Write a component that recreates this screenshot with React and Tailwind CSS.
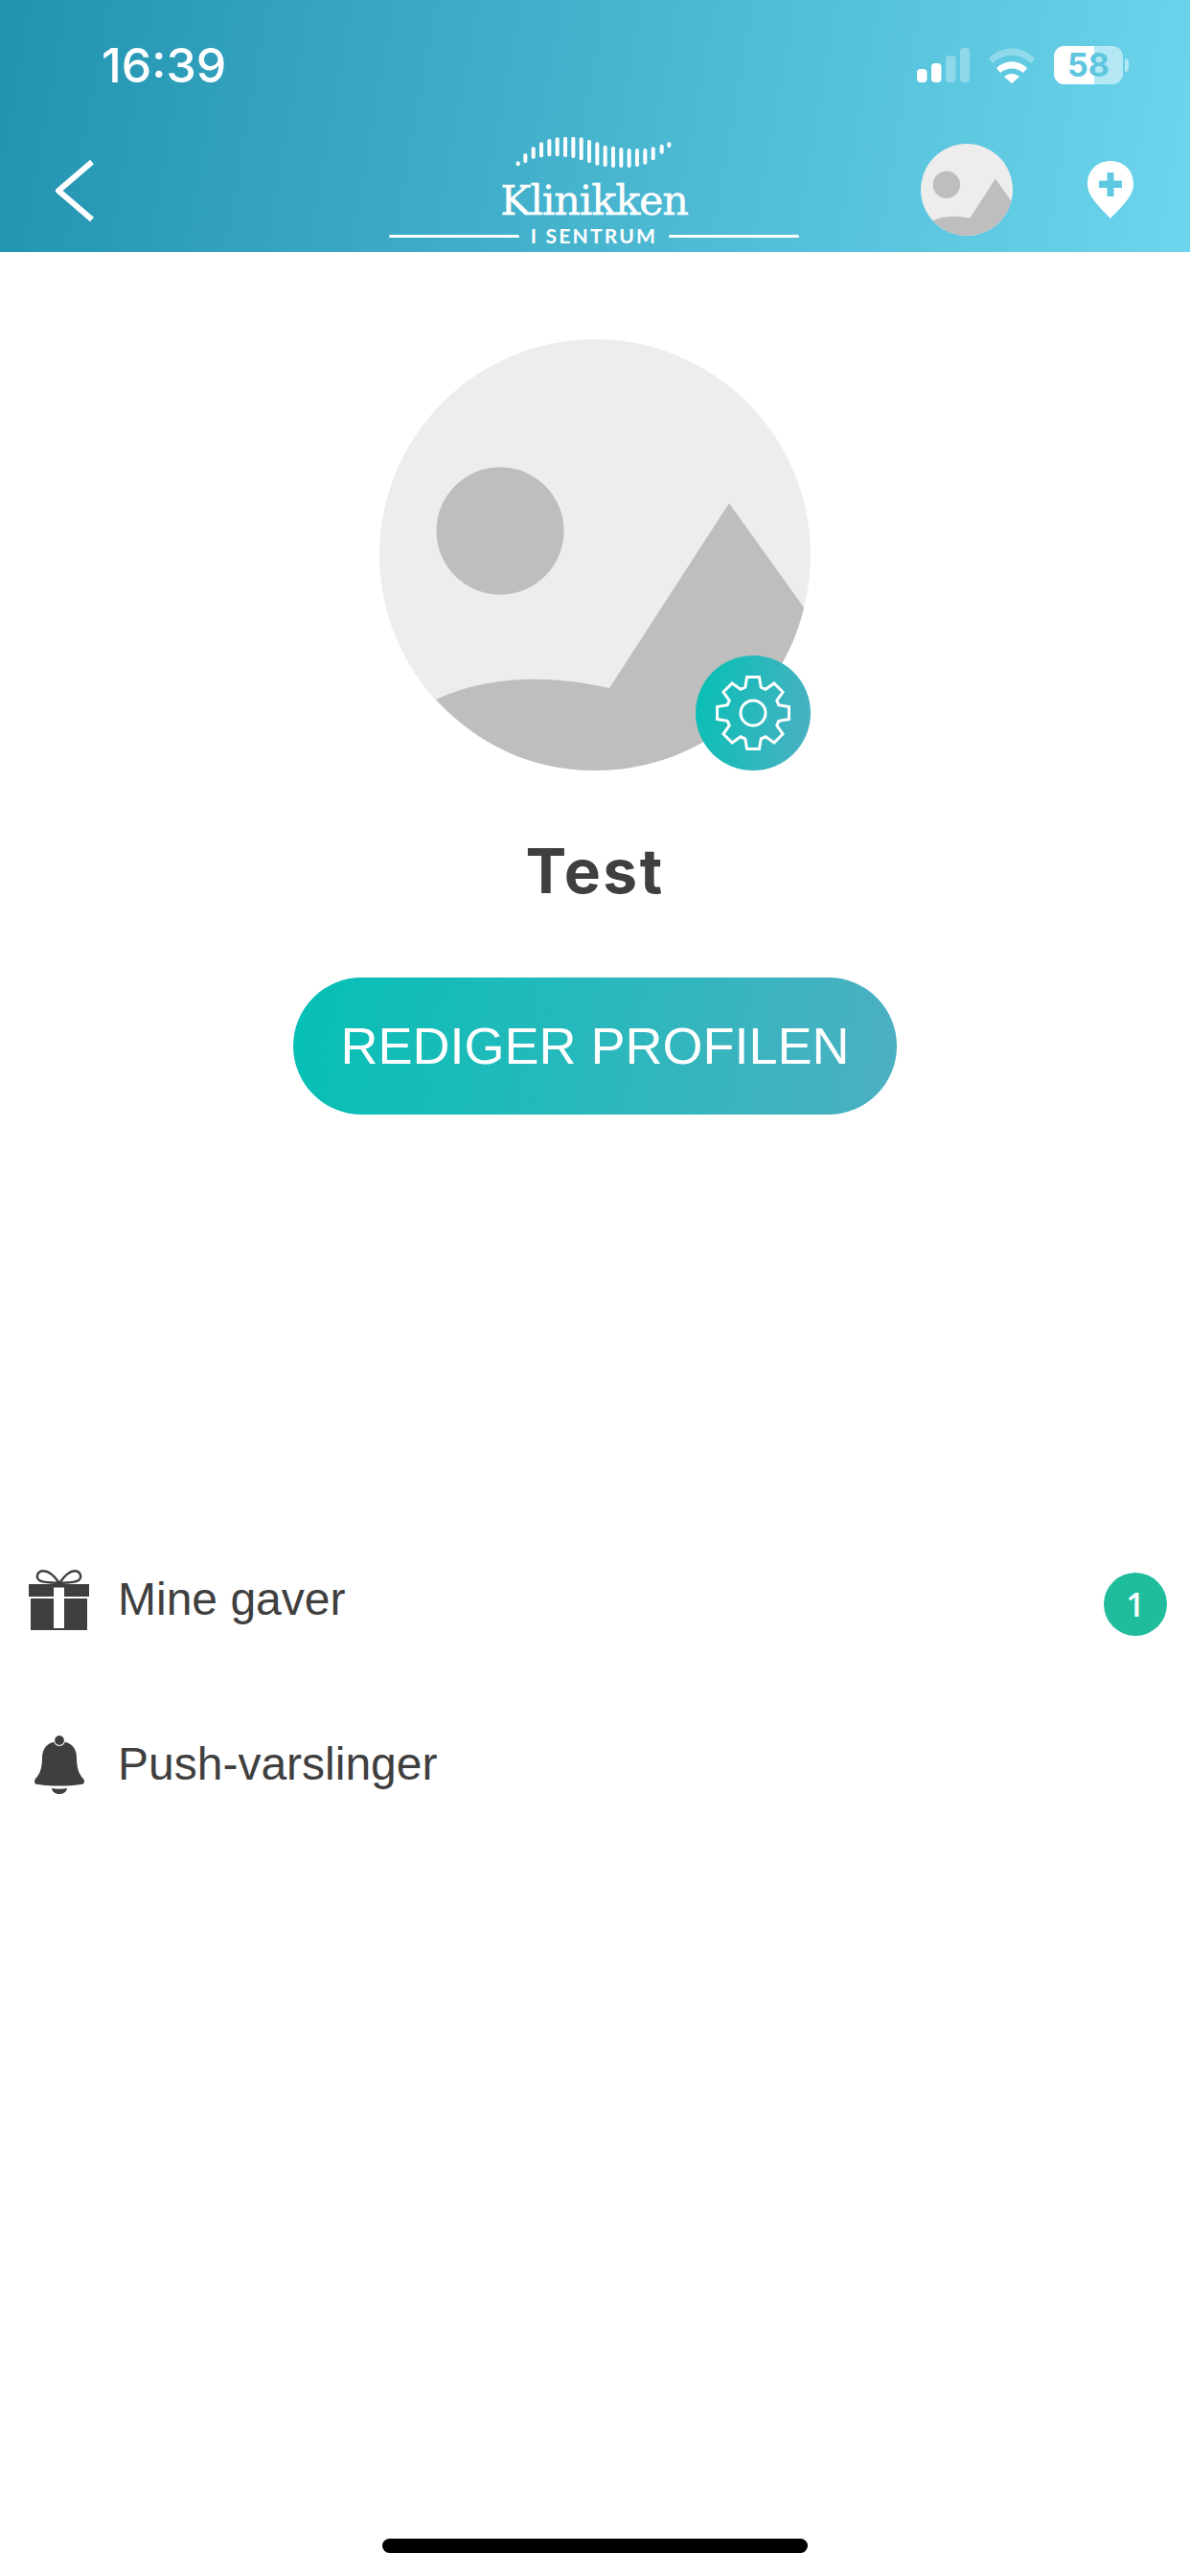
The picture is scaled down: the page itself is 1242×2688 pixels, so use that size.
import React from 'react';

function Chevron() {
    return (
        <svg width="41" height="64" viewBox="0 0 41 64" className="block">
            <path d="M39 2 L4 32 L39 62" fill="none" stroke="#fff" strokeWidth="6" strokeLinejoin="round" />
        </svg>
    );
}

function SignalIcon() {
    return (
        <svg width="55" height="36" viewBox="0 0 55 36" className="block">
            <rect x="0" y="22" width="10.5" height="14" rx="4" fill="#fff" />
            <rect x="15" y="16" width="10.5" height="20" rx="4" fill="#fff" />
            <rect x="30" y="8" width="10.5" height="28" rx="4" fill="#fff" opacity="0.3" />
            <rect x="45" y="0" width="10.5" height="36" rx="4" fill="#fff" opacity="0.3" />
        </svg>
    );
}

function WifiIcon() {
    return (
        <svg width="48" height="37" viewBox="0 0 48 37" className="block">
            <path d="M0 11 C13 -3 35 -3 48 11 L44 16 C32 5 16 5 4 16 Z" fill="#fff" opacity="0.3" />
            <path d="M8 21 C17 12 31 12 40 21 L36 26 C29 20 19 20 12 26 Z" fill="#fff" />
            <path d="M16 30 C21 26 27 26 32 30 L24 37 Z" fill="#fff" />
        </svg>
    );
}

function Battery() {
    return (
        <div className="flex items-center gap-[2px]">
            <div className="relative w-[72px] h-[40px] rounded-[11px] overflow-hidden bg-white/50 flex items-center justify-center">
                <div className="absolute left-0 top-0 bottom-0 w-[42px] bg-white"></div>
                <span className="relative font-['Inter',sans-serif] font-bold text-[34px] leading-none text-[#5fc6e0]">58</span>
            </div>
            <div className="w-[4px] h-[14px] rounded-r-full bg-white/50"></div>
        </div>
    );
}

function LogoBars() {
    // wave above the logo name: x, top, bottom
    const bars = [
        [455, 115, 130], [478, 90, 120], [503, 70, 107], [528, 55, 103], [553, 45, 100],
        [578, 40, 100], [603, 38, 102], [628, 38, 105], [653, 40, 112], [678, 48, 120],
        [703, 55, 128], [728, 65, 132], [753, 68, 135], [778, 72, 135], [803, 75, 135],
        [828, 75, 132], [853, 75, 125], [878, 70, 112], [905, 62, 92], [928, 55, 72],
    ];
    return (
        <svg width="164" height="34" viewBox="447 36 492 102" className="block">
            {bars.map(([x, top, bottom]) => (
                <rect key={x} x={x - 6} y={top} width="12" height={bottom - top} rx="6" fill="#fff" />
            ))}
        </svg>
    );
}

function Logo() {
    return (
        <div className="flex flex-col items-center w-[428px]">
            <LogoBars />
            <div className="font-['DejaVu_Serif',serif] text-[43px] leading-[50px] tracking-[-1.2px] [-webkit-text-stroke:0.4px_white] text-white mt-[8px]">Klinikken</div>
            <div className="flex items-center w-full mt-[1px]">
                <div className="h-[3px] flex-1 rounded-full bg-white"></div>
                <div className="font-['Lato',sans-serif] font-bold text-[21px] leading-[22px] tracking-[2.2px] text-white px-[12px]">I SENTRUM</div>
                <div className="h-[3px] flex-1 rounded-full bg-white"></div>
            </div>
        </div>
    );
}

function Placeholder({ size }) {
    // placeholder picture, drawn in the 450 unit box of the big avatar
    return (
        <svg width={size} height={size} viewBox="0 0 450 450" className="block">
            <circle cx="225" cy="225" r="225" fill="#ededed" />
            <circle cx="126" cy="200" r="66.5" fill="#bebebe" />
            <path d="M59 376 C115 350 180 350 240 364 L365 171 L443 280 C420 380 330 450 225 450 C155 450 100 420 59 376 Z" fill="#bebebe" />
        </svg>
    );
}

function GearBadge() {
    const teeth = [];
    const outer = 38, inner = 28;
    for (let i = 0; i < 8; i++) {
        const a = (i * Math.PI) / 4 - Math.PI / 2;
        const pt = (r, d) => `${(60 + r * Math.cos(a + d)).toFixed(2)} ${(60 + r * Math.sin(a + d)).toFixed(2)}`;
        teeth.push(`${i === 0 ? 'M' : 'L'}${pt(inner, -0.3)} L${pt(outer, -0.17)} L${pt(outer, 0.17)} L${pt(inner, 0.3)}`);
    }
    return (
        <div className="absolute right-0 bottom-0 w-[120px] h-[120px] rounded-full bg-[linear-gradient(100deg,#05c0b5,#4db0c2)]">
            <svg width="120" height="120" viewBox="0 0 120 120" className="block">
                <path d={teeth.join(' ') + ' Z'} fill="none" stroke="#fff" strokeWidth="3" />
                <circle cx="60" cy="60" r="13" fill="none" stroke="#fff" strokeWidth="3" />
            </svg>
        </div>
    );
}

function GiftIcon() {
    return (
        <svg width="63" height="63" viewBox="0 0 63 63" className="block">
            <path d="M32 14 C28 8 22 1.2 15 1.2 C9 1.2 7 8 11 11 C15 14 24 13 32 14 Z" fill="none" stroke="#3f3f3f" strokeWidth="2.4" />
            <path d="M32 14 C36 8 42 1.2 48 1.2 C54 1.2 56 8 52 11 C48 14 40 13 32 14 Z" fill="none" stroke="#3f3f3f" strokeWidth="2.4" />
            <path d="M0 15 H63 V28 H37 V18.5 H26 V28 H0 Z" fill="#3f3f3f" />
            <path d="M2 30 H26 V61 H37 V30 H61 V63 H2 Z" fill="#3f3f3f" />
        </svg>
    );
}

function BellIcon() {
    return (
        <svg width="52" height="63" viewBox="0 0 52 63" className="block">
            <path d="M26 7 C38 7 44 14 44 24 C44 36 47 42 51 46 C53 49 52 52 48 52 C34 54 18 54 4 52 C0 52 -1 49 1 46 C5 42 8 36 8 24 C8 14 14 7 26 7 Z" fill="#3f3f3f" />
            <circle cx="26" cy="6" r="5.5" fill="#3f3f3f" stroke="#fff" strokeWidth="1.2" />
            <path d="M18 56 C23 57 29 57 34 56 C33 64 19 64 18 56 Z" fill="#3f3f3f" />
        </svg>
    );
}

function MenuRow({ icon, label, badge, className }) {
    return (
        <div className={'flex items-center h-[72px] pl-[30px] pr-[24px] ' + (className || '')}>
            <div className="w-[63px] flex justify-center">{icon}</div>
            <div className="ml-[30px] flex-1 text-[48px] leading-[56px] text-[#3f3f3f]">{label}</div>
            {badge && (
                <div className="mt-[10px] w-[66px] h-[66px] rounded-full bg-[#1fbd9c] flex items-center justify-center font-['Open_Sans',sans-serif] font-semibold text-[34px] text-white">
                    {badge}
                </div>
            )}
        </div>
    );
}

export default function App() {
    return (
        <div className="w-[1242px] h-[2688px] bg-white flex flex-col font-['Liberation_Sans',sans-serif]">
            <header className="h-[263px] shrink-0 bg-[linear-gradient(100deg,#2193b0,#6dd5ed)]">
                <div className="flex items-center h-[40px] pt-[48px] box-content pl-[106px] pr-[64px]">
                    <div className="font-['Inter',sans-serif] font-medium text-[50px] leading-[40px] text-white flex-1">16:39</div>
                    <div className="flex items-center gap-[20px]">
                        <SignalIcon />
                        <WifiIcon />
                        <Battery />
                    </div>
                </div>
                <div className="flex items-start h-[121px] mt-[54px] pl-[57px]">
                    <div className="mt-[25px]"><Chevron /></div>
                    <div className="ml-[308px]"><Logo /></div>
                    <div className="ml-[127px] mt-[8px]"><Placeholder size={96} /></div>
                    <div className="ml-[78px] mt-[26px]">
                        <svg width="48" height="60" viewBox="0 0 48 60" className="block">
                            <path d="M24 0 C38 0 48 10 48 24 C48 37 36 47 24 60 C12 47 0 37 0 24 C0 10 10 0 24 0 Z" fill="#fff" />
                            <path d="M20.5 12 H27.5 V20.5 H36 V28 H27.5 V37 H20.5 V28 H12 V20.5 H20.5 Z" fill="#5fc9e4" />
                        </svg>
                    </div>
                </div>
            </header>

            <div className="flex flex-col items-center pt-[91px]">
                <div className="relative w-[450px] h-[450px]">
                    <Placeholder size={450} />
                    <GearBadge />
                </div>
                <div className="mt-[65px] font-['Inter',sans-serif] font-bold text-[64px] leading-[80px] tracking-[2.5px] text-[#3f3f3f]">Test</div>
                <button className="mt-[71px] w-[630px] h-[143px] rounded-full bg-[linear-gradient(100deg,#05c0b5,#4db0c2)] text-white text-[54px]">
                    REDIGER PROFILEN
                </button>
            </div>

            <div className="flex flex-col mt-[470px]">
                <MenuRow icon={<GiftIcon />} label="Mine gaver" badge="1" />
                <MenuRow icon={<BellIcon />} label="Push-varslinger" className="mt-[100px]" />
            </div>

            <div className="mt-auto mb-[24px] mx-auto w-[444px] h-[15px] rounded-full bg-black"></div>
        </div>
    );
}
